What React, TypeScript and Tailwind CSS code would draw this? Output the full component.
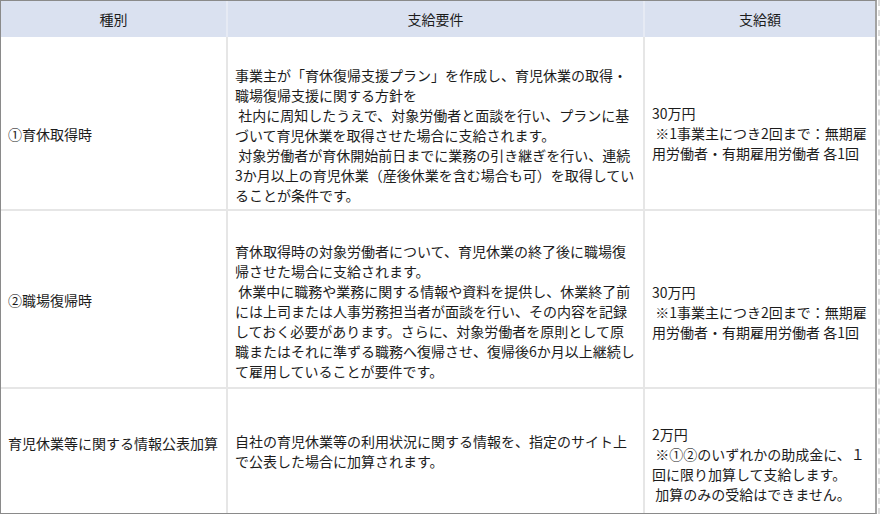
import React from 'react'

type Row = {
  label: string
  labelPad: string
  body: string[]
  bodyPad: string
  amount: string[]
  amountPad: string
  height: string
}

const NOTE_30 = ['30万円', ' ※1事業主につき2回まで：無期雇', '用労働者・有期雇用労働者 各1回']

const ROWS: Row[] = [
  {
    label: '①育休取得時',
    labelPad: 'pt-[22px]',
    body: [
      '事業主が「育休復帰支援プラン」を作成し、育児休業の取得・',
      '職場復帰支援に関する方針を',
      ' 社内に周知したうえで、対象労働者と面談を行い、プランに基',
      'づいて育児休業を取得させた場合に支給されます。',
      ' 対象労働者が育休開始前日までに業務の引き継ぎを行い、連続',
      '3か月以上の育児休業（産後休業を含む場合も可）を取得してい',
      'ることが条件です。',
    ],
    bodyPad: 'pt-[24px]',
    amount: NOTE_30,
    amountPad: 'pt-[20px]',
    height: 'h-[174px]',
  },
  {
    label: '②職場復帰時',
    labelPad: 'pt-[2px]',
    body: [
      '育休取得時の対象労働者について、育児休業の終了後に職場復',
      '帰させた場合に支給されます。',
      ' 休業中に職務や業務に関する情報や資料を提供し、休業終了前',
      'には上司または人事労務担当者が面談を行い、その内容を記録',
      'しておく必要があります。さらに、対象労働者を原則として原',
      '職またはそれに準ずる職務へ復帰させ、復帰後6か月以上継続し',
      'て雇用していることが要件です。',
    ],
    bodyPad: 'pt-[24px]',
    amount: NOTE_30,
    amountPad: 'pt-[26px]',
    height: 'h-[178px]',
  },
  {
    label: '育児休業等に関する情報公表加算',
    labelPad: 'pb-[16px]',
    body: ['自社の育児休業等の利用状況に関する情報を、指定のサイト上', 'で公表した場合に加算されます。'],
    bodyPad: 'pt-[0px]',
    amount: ['2万円', ' ※①②のいずれかの助成金に、１', '回に限り加算して支給します。', ' 加算のみの受給はできません。'],
    amountPad: 'pt-[26px]',
    height: 'flex-1',
  },
]

function Lines({ lines }: { lines: string[] }) {
  return (
    <div>
      {lines.map((l, i) => (
        <div key={i} className="whitespace-pre">
          {l}
        </div>
      ))}
    </div>
  )
}

export default function App() {
  return (
    <div className="w-[881px] h-[515px] bg-white overflow-hidden flex text-[14px] leading-[20px] text-[#1c1c1c] font-['Noto_Sans_CJK_JP','Noto_Sans',sans-serif]">
      <div className="w-[877px] h-[514px] flex flex-col border-l border-t border-b border-r-2 border-l-[#8a8a8a] border-t-[#8a8a8a] border-b-[#8a8a8a] border-r-[#a3a3a3]">
        {/* header */}
        <div className="h-[36px] flex bg-[#dae1f0]">
          <div className="w-[227px] flex items-center justify-center border-r-2 border-[#e6eaf4]">種別</div>
          <div className="w-[417px] flex items-center justify-center border-r-2 border-[#e6eaf4]">支給要件</div>
          <div className="flex-1 flex items-center justify-center">支給額</div>
        </div>

        {ROWS.map((r, i) => (
          <div
            key={i}
            className={`${r.height} flex ${i < ROWS.length - 1 ? 'border-b-2 border-[#e6e6e6]' : ''}`}
          >
            <div className={`w-[227px] flex items-center px-[7px] border-r-2 border-[#e6e6e6] ${r.labelPad}`}>
              {r.label}
            </div>
            <div className={`w-[417px] flex items-center px-[7px] border-r-2 border-[#e6e6e6] ${r.bodyPad}`}>
              <Lines lines={r.body} />
            </div>
            <div className={`flex-1 flex items-center px-[7px] ${r.amountPad}`}>
              <Lines lines={r.amount} />
            </div>
          </div>
        ))}
      </div>
      {/* sheet gridlines beyond the table */}
      <div className="flex-1 h-[514px] ml-[1px] border-l-2 border-dashed border-[#dcdcdc]" />
    </div>
  )
}
